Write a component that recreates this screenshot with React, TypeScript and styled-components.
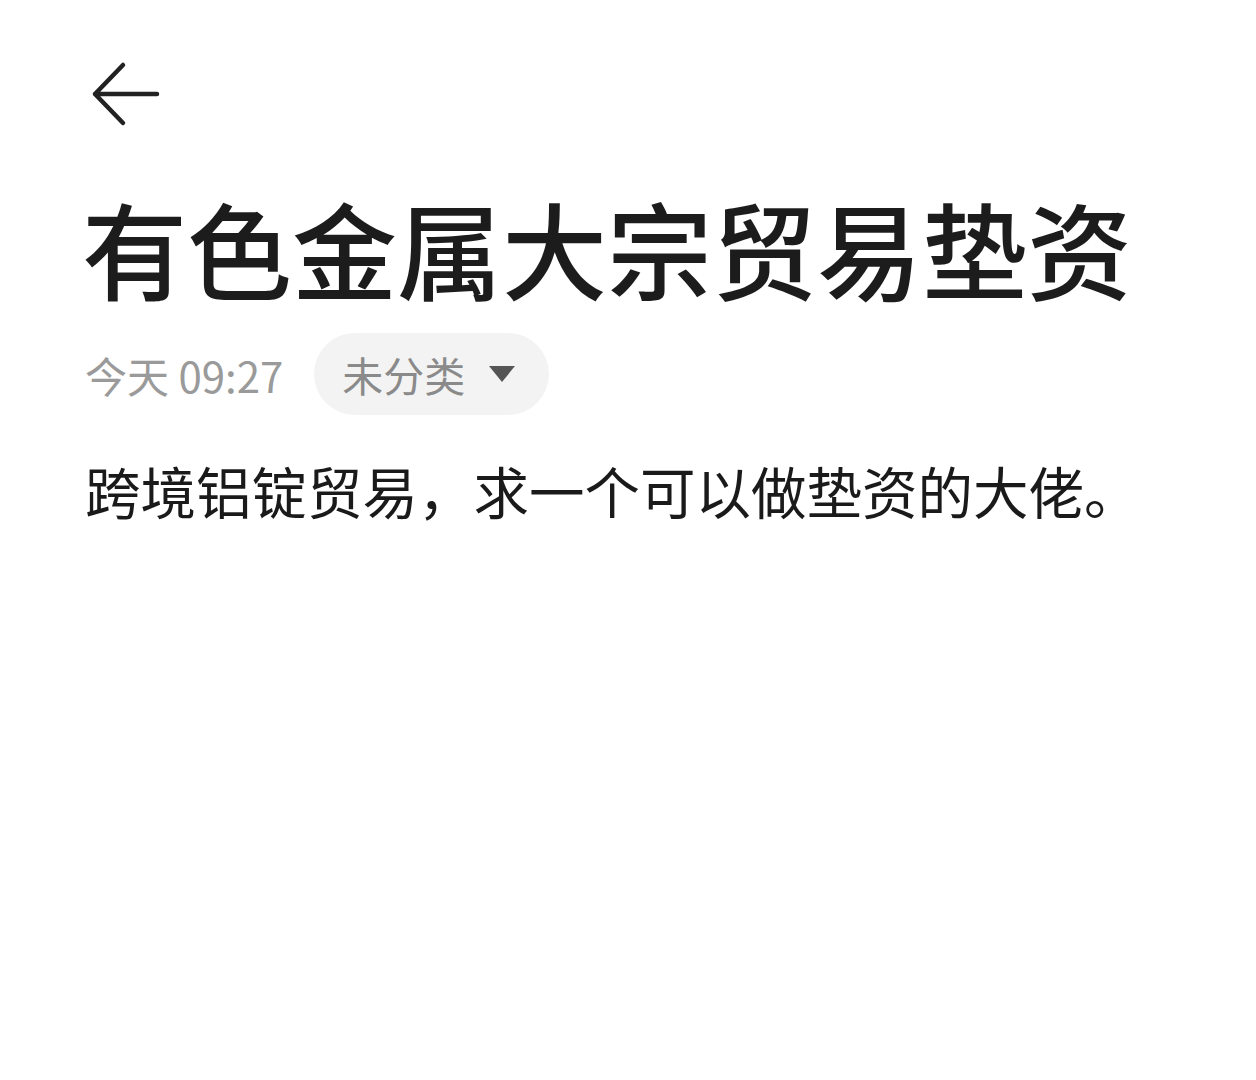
import React from "react";
import styled, { createGlobalStyle } from "styled-components";

const GlobalStyle = createGlobalStyle`
  html, body {
    margin: 0;
    padding: 0;
    background: #ffffff;
  }
  body {
    font-family: "Noto Sans CJK SC", "Noto Sans", sans-serif;
  }
`;

const Page = styled.div`
  width: 1256px;
  min-height: 1080px;
  box-sizing: border-box;
  padding: 58px 0 0 85px;
  display: flex;
  flex-direction: column;
  align-items: flex-start;
`;

const BackButton = styled.button`
  border: none;
  background: none;
  padding: 0;
  margin: 0 0 0 5px;
  width: 72px;
  height: 72px;
  display: flex;
  align-items: center;
  justify-content: center;
  cursor: pointer;
  color: #222222;
`;

const Title = styled.h1`
  margin: 53px 0 0 -3px;
  font-size: 105px;
  line-height: 126px;
  font-weight: 500;
  color: #1c1c1c;
`;

const MetaRow = styled.div`
  margin-top: 24px;
  display: flex;
  align-items: center;
  gap: 31px;
`;

const Time = styled.span`
  font-size: 42px;
  color: #9a9a9a;
  font-family: "Noto Sans CJK SC", "Roboto", sans-serif;
`;

const CategoryChip = styled.button`
  border: none;
  height: 82px;
  padding: 0 34px 0 28px;
  border-radius: 41px;
  background: #f3f3f3;
  display: flex;
  align-items: center;
  gap: 24px;
  font-family: inherit;
  font-size: 41px;
  color: #8a8a8a;
  cursor: pointer;
`;

const Caret = styled.span`
  width: 0;
  height: 0;
  border-left: 13px solid transparent;
  border-right: 13px solid transparent;
  border-top: 16px solid #555555;
`;

const Body = styled.p`
  margin: 37px 0 0;
  font-size: 55.5px;
  line-height: 76px;
  color: #1a1a1a;
  font-weight: 400;
`;

const BackArrow = () => (
  <svg width="70" height="66" viewBox="0 0 70 66" fill="none">
    <path
      d="M66 33H4M32 4L4 33L32 62"
      stroke="currentColor"
      strokeWidth="4.5"
      strokeLinecap="round"
      strokeLinejoin="round"
    />
  </svg>
);

export default function App() {
  return (
    <>
      <GlobalStyle />
      <Page>
        <BackButton aria-label="返回">
          <BackArrow />
        </BackButton>
        <Title>有色金属大宗贸易垫资</Title>
        <MetaRow>
          <Time>今天 09:27</Time>
          <CategoryChip>
            未分类
            <Caret />
          </CategoryChip>
        </MetaRow>
        <Body>跨境铝锭贸易，求一个可以做垫资的大佬。</Body>
      </Page>
    </>
  );
}
